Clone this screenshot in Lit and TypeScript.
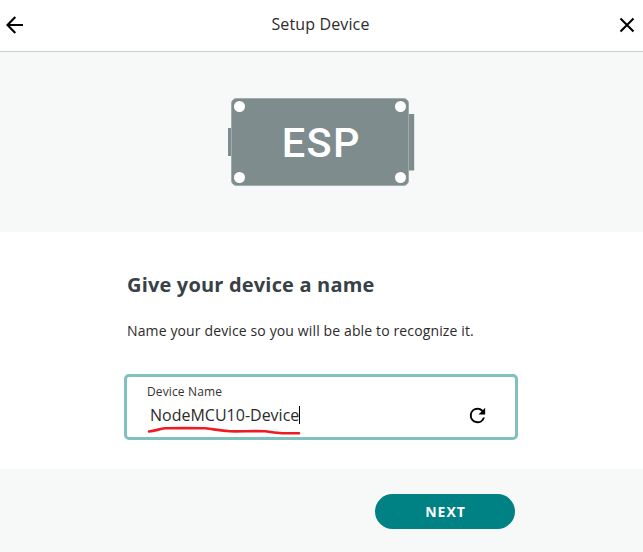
import { LitElement, html, css } from "lit";
import { customElement, property } from "lit/decorators.js";

@customElement("device-board")
class DeviceBoard extends LitElement {
  static styles = css`
    :host { display: block; line-height: 0; }
    .label { font: 500 41.5px Roboto, sans-serif; letter-spacing: 1.4px; }
  `;
  render() {
    return html`<svg width="188" height="90" viewBox="0 0 188 90">
      <g fill="#7f8c8d">
        <rect x="1" y="31" width="4" height="28" />
        <rect x="181" y="17" width="6.2" height="56.5" />
        <rect x="4.5" y="1.5" width="177" height="87" rx="5" stroke="#a1abab" />
      </g>
      <g fill="#fff">
        <circle cx="12.5" cy="9.5" r="5.5" />
        <circle cx="173.5" cy="9.5" r="5.5" />
        <circle cx="12.5" cy="80.5" r="5.5" />
        <circle cx="173.5" cy="80.5" r="5.5" />
        <text class="label" x="54.7" y="59.5">ESP</text>
      </g>
    </svg>`;
  }
}

@customElement("name-field")
class NameField extends LitElement {
  @property() label = "";
  @property() value = "";
  static styles = css`
    :host {
      display: flex; box-sizing: border-box; width: 394px; height: 66px;
      border: 3px solid #80c0c0; border-radius: 5px; background: #fff;
      justify-content: space-between; padding: 7px 26px 0 20px;
    }
    .label { font-size: 12px; line-height: 16px; letter-spacing: 0.13px; color: #333; }
    .value {
      position: relative; display: flex; align-items: center; width: max-content;
      font-size: 16px; line-height: 22px; margin: 4px 0 0 3px; color: #2b2b2b;
    }
    .caret { width: 1px; height: 18px; background: #000; }
    .mark { position: absolute; left: -3px; top: 22px; }
    .reload { margin-top: 20px; }
  `;
  render() {
    return html`
      <div>
        <div class="label">${this.label}</div>
        <div class="value">
          <span>${this.value}</span><span class="caret"></span>
          <svg class="mark" width="156" height="10" viewBox="0 0 156 10">
            <path d="M2 5.5C8 5 12 3 18 2.3C32 2 44 2 58 2.3C67 3.2 73 4.6 83 5.3C94 5.7 106 4.6 118 5.3C124 6 129 7 135 7.2L152 7.2"
              fill="none" stroke="#ed1c24" stroke-width="2.6" stroke-linecap="round" stroke-linejoin="round" />
          </svg>
        </div>
      </div>
      <svg class="reload" width="23" height="23" viewBox="0 0 24 24">
        <path d="M17.65 6.35A7.96 7.96 0 0 0 12 4a8 8 0 1 0 7.73 10h-2.08A6 6 0 1 1 12 6c1.66 0 3.14.69 4.22 1.78L13 11h7V4z" />
      </svg>`;
  }
}

@customElement("app-root")
class AppRoot extends LitElement {
  static styles = css`
    :host {
      display: flex; flex-direction: column; width: 643px; height: 552px; overflow: hidden;
      background: #fff; color: #2b2b2b; font-family: "Open Sans", "Noto Sans", sans-serif;
    }
    header {
      box-sizing: border-box; height: 52px; display: flex; align-items: center;
      justify-content: space-between; padding: 0 8px 3px 5px; border-bottom: 1px solid #c9cfcf;
    }
    .title { font-size: 16px; line-height: 22px; letter-spacing: 0.13px; margin-right: 2px; }
    .hero { height: 180px; background: #f7f9f9; display: flex; padding: 45px 0 0 227px; box-sizing: border-box; }
    main { height: 237px; box-sizing: border-box; padding: 38px 0 0 124px; }
    h1 { margin: 0 3px; font-size: 20px; line-height: 30px; font-weight: 700; letter-spacing: 0.18px; color: #374146; }
    p { margin: 20px 3px 33px; font-size: 14px; line-height: 21px; letter-spacing: 0.13px; }
    footer { flex: 1; background: #f7f9f9; display: flex; padding: 25px 128px 0 0; justify-content: flex-end; align-items: flex-start; }
    button {
      width: 140px; height: 35px; border: 0; border-radius: 18px; padding: 0 0 0 1px; background: #008184;
      color: #fff; font: 700 14px "Open Sans", sans-serif; letter-spacing: 1px;
    }
    header svg { display: block; fill: none; stroke: #000; stroke-width: 2.1; position: relative; top: 0.5px; }
  `;
  render() {
    return html`
      <header>
        <svg width="19" height="18" viewBox="0 0 19 18"><path d="M18 9H3M10.3 1L2.5 9L10.3 17" /></svg>
        <span class="title">Setup Device</span>
        <svg width="16" height="16" viewBox="0 0 16 16"><path d="M1.5 1.5L14.5 14.5M14.5 1.5L1.5 14.5" /></svg>
      </header>
      <section class="hero"><device-board></device-board></section>
      <main>
        <h1>Give your device a name</h1>
        <p>Name your device so you will be able to recognize it.</p>
        <name-field label="Device Name" value="NodeMCU10-Device"></name-field>
      </main>
      <footer><button>NEXT</button></footer>`;
  }
}
